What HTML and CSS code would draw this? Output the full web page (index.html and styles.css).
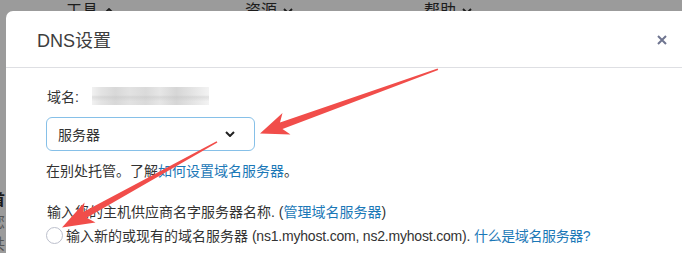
FILE: index.html
```html
<!DOCTYPE html>
<html lang="zh-CN">
<head>
<meta charset="utf-8">
<link rel="stylesheet" href="styles.css">
</head>
<body>
<div class="page">
  <nav class="topnav">
    <span class="nav-item">工具 <svg class="nav-caret" viewBox="0 0 10 6" width="10" height="6"><path d="M1 5 L5 1 L9 5" /></svg></span>
    <span class="nav-item">资源 <svg class="nav-caret" viewBox="0 0 10 6" width="10" height="6"><path d="M1 1 L5 5 L9 1" /></svg></span>
    <span class="nav-item">帮助 <svg class="nav-caret" viewBox="0 0 10 6" width="10" height="6"><path d="M1 1 L5 5 L9 1" /></svg></span>
  </nav>
  <div class="side">
    <div class="side-head">首</div>
    <div class="side-line">您</div>
    <div class="side-line">共</div>
  </div>
</div>

<div class="modal">
  <div class="modal-header">
    <h2 class="modal-title">DNS设置</h2>
    <svg class="modal-close" viewBox="0 0 10 10" width="10" height="10"><path d="M1 1 L9 9 M9 1 L1 9" /></svg>
  </div>
  <div class="modal-body">
    <div class="domain-row">
      <span class="domain-label">域名:</span>
      <span class="domain-blur"></span>
    </div>
    <div class="select">
      <span class="select-value">服务器</span>
      <svg class="select-chevron" viewBox="0 0 10 6" width="10" height="6"><path d="M1 1 L5 5 L9 1" /></svg>
    </div>
    <p class="help">在别处托管。了解<a class="link">如何设置域名服务器</a>。</p>
    <p class="instruction">输入您的主机供应商名字服务器名称. (<a class="link">管理域名服务器</a>)</p>
    <label class="radio-row">
      <span class="radio"></span>
      <span>输入新的或现有的域名服务器 <span class="hosts">(ns1.myhost.com, ns2.myhost.com).</span> <a class="link tight">什么是域名服务器?</a></span>
    </label>
  </div>
</div>

<svg class="annotations" viewBox="0 0 682 253" width="682" height="253">
  <polygon points="260,133.5 290.5,134.5 282.5,129 438.2,69.9 437.6,68.4 280,122.5 282.5,113" />
  <polygon points="62,227.5 95.5,222.5 86.6,217.8 217.4,142.6 216.6,141.3 83.2,212 84.5,202.5" />
</svg>
</body>
</html>
```

FILE: styles.css
```css
html, body {
  margin: 0;
  padding: 0;
}

body {
  width: 682px;
  height: 253px;
  overflow: hidden;
  background: #9b9b9b;
  font-family: "Liberation Sans", "Noto Sans CJK SC", sans-serif;
  color: #333;
}

.page {
  display: flex;
  flex-direction: column;
}

.topnav {
  display: flex;
  padding-left: 66px;
  height: 22px;
  line-height: 22px;
  font-size: 16px;
  color: #1c1c1c;
}

.nav-item {
  width: 179px;
  display: flex;
  align-items: center;
  gap: 6px;
}

.nav-caret {
  fill: none;
  stroke: #1c1c1c;
  stroke-width: 1.8;
}

.side {
  margin-top: 167px;
  margin-left: -10px;
  font-size: 15px;
  line-height: 21px;
}

.side-head {
  font-weight: bold;
  color: #1a1a1a;
}

.side-line {
  color: #555;
  margin-top: 1px;
}

.modal {
  position: absolute;
  left: 6px;
  top: 11px;
  width: 720px;
  height: 300px;
  background: #fff;
  border-radius: 7px;
}

.modal-header {
  height: 56px;
  display: flex;
  align-items: center;
  padding-left: 31px;
  border-bottom: 1px solid #dedfe3;
}

.modal-title {
  margin: 0;
  font-size: 18px;
  font-weight: normal;
  color: #3d3d3d;
  flex: 0 0 auto;
}

.modal-close {
  margin-left: 546px;
  margin-top: 2px;
  fill: none;
  stroke: #6f7590;
  stroke-width: 2;
}

.modal-body {
  padding: 18px 0 0 40px;
  font-size: 14px;
}

.domain-row {
  display: flex;
  align-items: center;
  height: 20px;
  padding-left: 1px;
}

.domain-label {
  margin-right: 13px;
}

.domain-blur {
  width: 117px;
  height: 18px;
  background:
    linear-gradient(180deg, rgba(255,255,255,0) 45%, rgba(190,190,190,0.35) 55%, rgba(255,255,255,0) 80%),
    linear-gradient(90deg, #f1f1f1 0, #e3e3e3 8%, #d8d8d8 20%, #e2e2e2 32%, #dadada 46%, #e6e6e6 58%, #d6d6d6 72%, #e4e4e4 86%, #f3f3f3 100%);
}

.select {
  margin-top: 11px;
  width: 209px;
  height: 34px;
  box-sizing: border-box;
  border: 1px solid #86c0e8;
  border-radius: 6px;
  display: flex;
  align-items: center;
  padding: 0 19px 0 11px;
}

.select-value {
  flex: 1;
}

.select-chevron {
  fill: none;
  stroke: #222;
  stroke-width: 2;
}

.help {
  margin: 10px 0 0;
  line-height: 20px;
}

.instruction {
  margin: 21px 0 0 1px;
  line-height: 20px;
}

.radio-row {
  margin-top: 3px;
  display: flex;
  align-items: center;
  height: 20px;
  gap: 3px;
}

.radio {
  width: 17px;
  height: 17px;
  box-sizing: border-box;
  border: 1px solid #bcbfcc;
  border-radius: 50%;
  background: #fff;
  flex: 0 0 auto;
}

.hosts {
  letter-spacing: -0.2px;
}

.link {
  color: #1b78b7;
  text-decoration: none;
}

.tight {
  letter-spacing: -0.4px;
}

.annotations {
  position: absolute;
  left: 0;
  top: 0;
  pointer-events: none;
  fill: #f14d4a;
}
```
